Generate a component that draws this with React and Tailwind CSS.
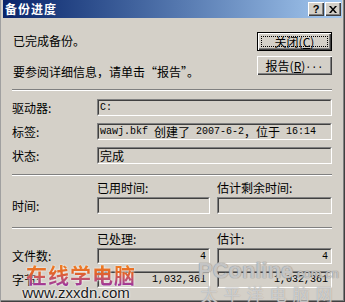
import React from 'react';

const cjk = "font-['SimSun','Noto_Sans_CJK_SC',sans-serif]";

function Sunken({ className = '', inner = '', children }) {
  return (
    <div className={`border border-t-[#808080] border-l-[#808080] border-b-white border-r-white ${className}`}>
      <div className={`h-full border border-t-[#404040] border-l-[#404040] border-b-[#d4d0c8] border-r-[#d4d0c8] flex items-center ${inner}`}>
        {children}
      </div>
    </div>
  );
}

function Separator({ className = '' }) {
  return <div className={`h-[2px] border-t border-t-[#808080] border-b border-b-white ${className}`} />;
}

function Mono({ children }) {
  return <span className="font-['Liberation_Mono',monospace] text-[10px]">{children}</span>;
}

export default function App() {
  return (
    <div className={`relative w-[345px] h-[302px] bg-[#d4d0c8] flex flex-col px-[3px] pb-[4px] text-[12px] text-black overflow-hidden ${cjk} shadow-[inset_1px_0_#a0a0a0,inset_-1px_-1px_#404040,inset_-2px_-2px_#808080]`}>
      {/* title bar */}
      <div className="h-[18px] shrink-0 flex items-center justify-between bg-gradient-to-r from-[#0a246a] to-[#a6caf0] pl-[2px] pr-[1px]">
        <span className="text-white font-bold text-[12px] leading-none tracking-[1px]">备份进度</span>
        <div className="flex gap-[1px]">
          <div className="w-[16px] h-[14px] bg-[#d4d0c8] shadow-[inset_1px_1px_#fff,inset_-1px_-1px_#404040,inset_-2px_-2px_#808080] flex items-center justify-center font-['Liberation_Sans',sans-serif] font-bold text-[11px] leading-none">?</div>
          <div className="w-[16px] h-[14px] bg-[#d4d0c8] shadow-[inset_1px_1px_#fff,inset_-1px_-1px_#404040,inset_-2px_-2px_#808080] flex items-center justify-center">
            <svg width="8" height="7" viewBox="0 0 8 7">
              <path d="M0 0h2l2 2.5L6 0h2L5 3.5 8 7H6L4 4.5 2 7H0l3-3.5z" fill="#000" />
            </svg>
          </div>
        </div>
      </div>

      {/* body */}
      <div className="flex-1 flex flex-col pl-[9px] pr-[10px]">
        <div className="h-[71px] flex justify-between">
          <div className="flex flex-col pt-[15px] gap-[15px] pl-[1px]">
            <div className="leading-[16px]">已完成备份。</div>
            <div className="leading-[16px]">要参阅详细信息，请单击“报告”。</div>
          </div>
          <div className="flex flex-col pt-[14px] gap-[5px]">
            <div className="w-[75px] h-[19px] border border-black bg-[#d4d0c8] shadow-[inset_1px_1px_#fff,inset_-1px_-1px_#404040,inset_-2px_-2px_#808080] p-[3px]">
              <div className="h-full border border-dotted border-black flex items-center justify-center leading-none">
                关闭(<span className="underline">C</span>)
              </div>
            </div>
            <div className="w-[75px] h-[19px] bg-[#d4d0c8] shadow-[inset_1px_1px_#fff,inset_-1px_-1px_#404040,inset_-2px_-2px_#808080] flex items-center justify-center leading-none">
              报告(<span className="underline">R</span>)<Mono>...</Mono>
            </div>
          </div>
        </div>

        <Separator />

        <div className="mt-[8px] flex flex-col gap-[7px]">
          <div className="flex h-[17px]">
            <div className="w-[85px] flex items-center">驱动器:</div>
            <Sunken className="flex-1" inner="pl-[1px]"><Mono>C:</Mono></Sunken>
          </div>
          <div className="flex h-[17px]">
            <div className="w-[85px] flex items-center">标签:</div>
            <Sunken className="flex-1" inner="pl-[1px] whitespace-pre">
              <Mono>wawj.bkf </Mono>创建了<Mono> 2007-6-2</Mono>，位于<Mono> 16:14</Mono>
            </Sunken>
          </div>
          <div className="flex h-[17px]">
            <div className="w-[85px] flex items-center">状态:</div>
            <Sunken className="flex-1" inner="pl-[1px]">完成</Sunken>
          </div>
        </div>

        <Separator className="mt-[10px]" />

        <div className="mt-[4px] flex">
          <div className="w-[85px] pt-[17px] flex items-center h-[34px]">时间:</div>
          <div className="flex-1 flex gap-[7px]">
            <div className="w-[113px] flex flex-col gap-[1px]">
              <div className="h-[16px] leading-[16px]">已用时间:</div>
              <Sunken className="h-[17px]" />
            </div>
            <div className="flex-1 flex flex-col gap-[1px]">
              <div className="h-[16px] leading-[16px]">估计剩余时间:</div>
              <Sunken className="h-[17px]" />
            </div>
          </div>
        </div>

        <Separator className="mt-[13px]" />

        <div className="mt-[2px] flex">
          <div className="w-[85px] flex flex-col">
            <div className="h-[17px]" />
            <div className="h-[16px] flex items-center">文件数:</div>
            <div className="h-[7px]" />
            <div className="h-[17px] flex items-center">字节:</div>
          </div>
          <div className="flex-1 flex gap-[7px]">
            <div className="w-[113px] flex flex-col">
              <div className="h-[16px] leading-[16px] mb-[1px]">已处理:</div>
              <Sunken className="h-[16px]" inner="justify-end pr-[2px]"><Mono>4</Mono></Sunken>
              <Sunken className="h-[17px] mt-[7px]" inner="justify-end pr-[2px]"><Mono>1,032,361</Mono></Sunken>
            </div>
            <div className="flex-1 flex flex-col">
              <div className="h-[16px] leading-[16px] mb-[1px]">估计:</div>
              <Sunken className="h-[16px]" inner="justify-end pr-[2px]"><Mono>4</Mono></Sunken>
              <Sunken className="h-[17px] mt-[7px]" inner="justify-end pr-[2px]"><Mono>1,032,361</Mono></Sunken>
            </div>
          </div>
        </div>
      </div>

      {/* PConline watermark */}
      <div className="absolute left-[198px] top-[260px] flex flex-col items-end pointer-events-none">
        <div className="font-['Liberation_Sans',sans-serif] font-bold text-[22px] leading-[22px] text-white/50 [text-shadow:0_0_1px_#8a8a8a,0_0_1px_#8a8a8a]">
          PConline<span className="text-[13px] font-normal">.com.cn</span>
        </div>
        <div className="text-[17px] leading-[18px] tracking-[6px] text-white/50 [text-shadow:0_0_1px_#909090]">太平洋电脑网</div>
      </div>

      {/* zxxdn watermark */}
      <div className="absolute left-[16px] top-[262px] flex flex-col items-center pointer-events-none">
        <div className="ml-[10px] drop-shadow-[0_0_1px_#fff] drop-shadow-[0_0_1px_#fff]">
          <div className="font-bold text-[21px] leading-[24px] tracking-[1px] bg-gradient-to-b from-[#f58a1f] via-[#e0602a] to-[#9a2ea0] bg-clip-text text-transparent">
            在线学电脑
          </div>
        </div>
        <div className="font-['Liberation_Sans',sans-serif] text-[15px] leading-[13px] text-[#1a1a1a] [text-shadow:0_0_2px_#fff,0_0_2px_#fff]">
          www.zxxdn.com
        </div>
      </div>
    </div>
  );
}
